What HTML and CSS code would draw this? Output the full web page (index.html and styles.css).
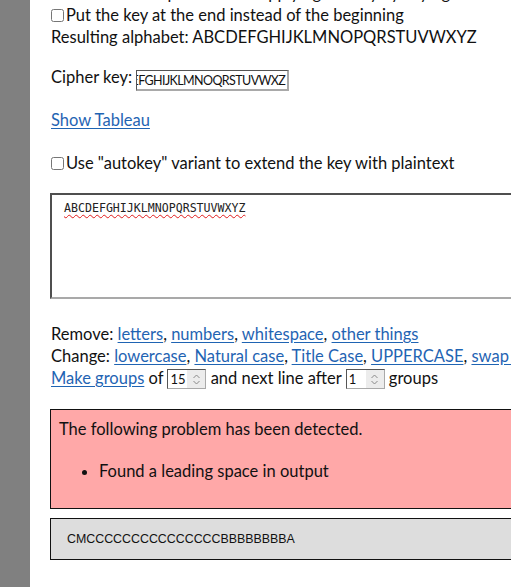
FILE: index.html
```html
<!DOCTYPE html>
<html lang="en">
<head>
<meta charset="utf-8">
<title>Keyed Vigenère</title>
<link rel="stylesheet" href="styles.css">
</head>
<body>
<div class="page">
  <aside class="side"></aside>
  <main class="content">
    <div class="line opt-cut"><label><input type="checkbox" class="cb">Reverse the alphabet after applying the key by keying</label></div>
    <div class="line"><label><input type="checkbox" class="cb">Put the key at the end instead of the beginning</label></div>
    <div class="line">Resulting alphabet: ABCDEFGHIJKLMNOPQRSTUVWXYZ</div>

    <div class="line gap-key">Cipher key: <span class="keybox"><span class="keytext">ABCDEFGHIJKLMNOQRSTUVWXZ</span></span></div>

    <div class="line gap-tab"><a href="#" class="lnk">Show Tableau</a></div>

    <div class="line gap-auto"><label><input type="checkbox" class="cb">Use "autokey" variant to extend the key with plaintext</label></div>

    <div class="textarea"><span class="typo">ABCDEFGHIJKLMNOPQRSTUVWXYZ</span></div>

    <div class="tools">
      <div class="line">Remove: <a href="#" class="lnk">letters</a>, <a href="#" class="lnk">numbers</a>, <a href="#" class="lnk">whitespace</a>, <a href="#" class="lnk">other things</a></div>
      <div class="line nowrap">Change: <a href="#" class="lnk">lowercase</a>, <a href="#" class="lnk">Natural case</a>, <a href="#" class="lnk">Title Case</a>, <a href="#" class="lnk">UPPERCASE</a>, <a href="#" class="lnk">swap case</a></div>
      <div class="line"><a href="#" class="lnk">Make groups</a> of <span class="spin"><span class="spin-val">15</span><span class="spin-btn"><svg width="9" height="13" viewBox="0 0 9 13"><path d="M1.5 5 L4.5 2 L7.5 5 M1.5 8 L4.5 11 L7.5 8" fill="none" stroke="#8a8a8a" stroke-width="1"/></svg></span></span> and next line after <span class="spin"><span class="spin-val">1</span><span class="spin-btn"><svg width="9" height="13" viewBox="0 0 9 13"><path d="M1.5 5 L4.5 2 L7.5 5 M1.5 8 L4.5 11 L7.5 8" fill="none" stroke="#8a8a8a" stroke-width="1"/></svg></span></span> groups</div>
    </div>

    <div class="problem">
      <p class="problem-title">The following problem has been detected.</p>
      <ul class="problem-list"><li>Found a leading space in output</li></ul>
    </div>

    <div class="output">CMCCCCCCCCCCCCCCCBBBBBBBBA</div>
  </main>
</div>
</body>
</html>
```

FILE: styles.css
```css
html, body {
  margin: 0;
  padding: 0;
  overflow: hidden;
  background: #ffffff;
}
body {
  font-family: Lato, "Open Sans", sans-serif;
  font-size: 16.5px;
  line-height: 22px;
  color: #111111;
}
.page {
  display: flex;
  min-height: 587px;
  width: 760px;
}
.side {
  width: 30px;
  flex: 0 0 30px;
  background: #808080;
}
.content {
  flex: 1;
  padding: 0 0 0 21px;
  margin-top: -18px;
}
.line {
  height: 22px;
  white-space: nowrap;
}
.cb {
  width: 13px;
  height: 13px;
  margin: 0 2px 0 0;
  vertical-align: -1px;
}
.gap-key { margin-top: 18px; }
.gap-tab { margin-top: 21px; }
.gap-auto { margin-top: 21px; }
.lnk {
  color: #1f64b3;
  text-decoration: underline;
  text-underline-offset: 2px;
}
.keybox {
  display: inline-flex;
  justify-content: flex-end;
  overflow: hidden;
  width: 150px;
  height: 18px;
  vertical-align: -2px;
  border-style: solid;
  border-width: 1px 2px 2px 1px;
  border-color: #555555 #a9a9a9 #a9a9a9 #555555;
  background: #fff;
  font-size: 12.5px;
  letter-spacing: -0.6px;
  line-height: 19px;
}
.keytext {
  flex: 0 0 auto;
  padding-right: 2px;
}
.textarea {
  margin-top: 19px;
  height: 93px;
  width: 640px;
  margin-left: -1px;
  border-style: solid;
  border-width: 2px;
  border-color: #4f4f4f #a9a9a9 #a9a9a9 #4f4f4f;
  padding: 5px 12px 4px;
  font-family: "DejaVu Sans Mono", monospace;
  font-size: 11.6px;
  line-height: 16px;
  color: #222;
}
.typo {
  text-decoration: underline wavy #e01b1b;
  text-decoration-thickness: 1px;
  text-underline-offset: 2px;
}
.tools {
  margin-top: 24px;
}
.tools .line:last-child { height: 23px; }
.spin {
  display: inline-flex;
  align-items: stretch;
  width: 37px;
  height: 18px;
  vertical-align: 0;
  border-style: solid;
  border-width: 1px;
  border-color: #555555 #a9a9a9 #a9a9a9 #555555;
  background: #fff;
  font-size: 13px;
  line-height: 18px;
}
.spin-val {
  flex: 1;
  padding-left: 2px;
}
.spin-btn {
  width: 18px;
  background: #ececec;
  display: flex;
  align-items: center;
  justify-content: center;
}
.problem {
  margin-top: 19px;
  margin-left: -1px;
  width: 640px;
  background: #ffa8a8;
  border: 1px solid #111;
  padding: 8px 8px 26px;
}
.problem-title {
  margin: 0;
}
.problem-list {
  margin: 20px 0 0;
  padding-left: 40px;
}
.output {
  margin-top: 9px;
  margin-left: -1px;
  width: 640px;
  background: #dddddd;
  border: 1px solid #111;
  padding: 13px 16px 12px;
  font-family: "Liberation Sans", Arial, sans-serif;
  font-size: 12.4px;
  line-height: 15px;
  color: #111;
}
```
